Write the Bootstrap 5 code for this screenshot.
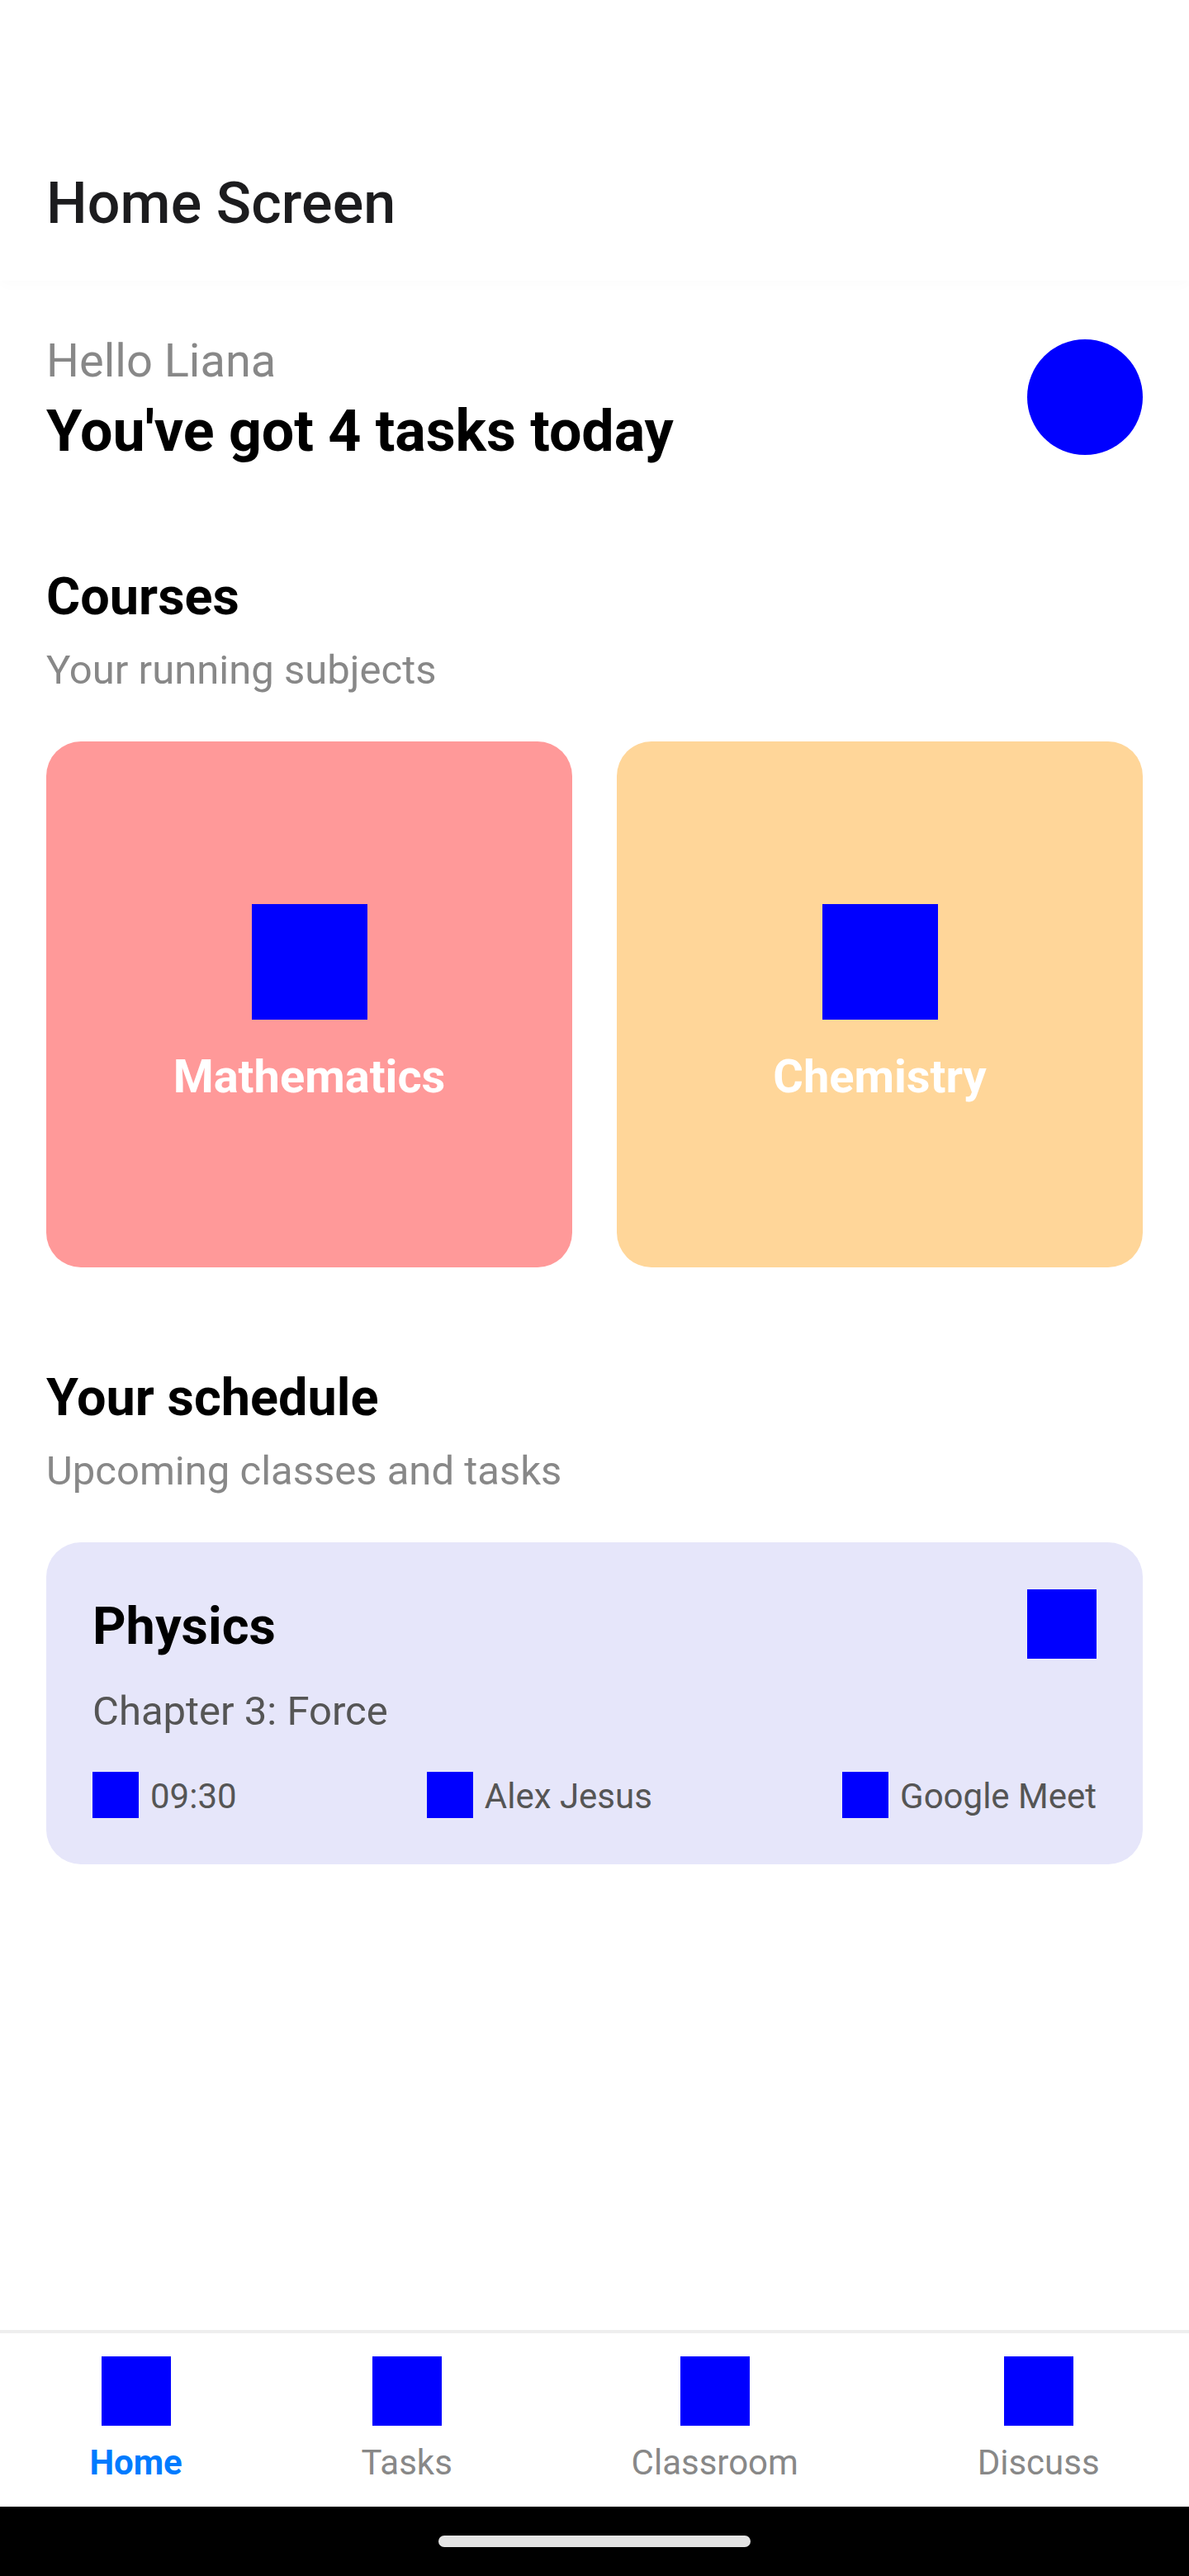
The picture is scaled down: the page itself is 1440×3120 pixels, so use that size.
<!DOCTYPE html>
<html lang="en">
<head>
<meta charset="utf-8">
<meta name="viewport" content="width=device-width, initial-scale=1">
<title>Home Screen</title>
<link href="https://cdn.jsdelivr.net/npm/bootstrap@5.3.0/dist/css/bootstrap.min.css" rel="stylesheet">
<style>
body{font-family:Roboto,sans-serif;background:#fff;color:#000;min-height:3120px}
.screen{height:3120px;overflow:hidden}
.app-header{height:340px;padding:205px 56px 0;background:#fff;box-shadow:0 4px 16px rgba(0,0,0,.02)}
.app-title{font-size:70px;line-height:82px;font-weight:500;letter-spacing:.1px;color:#1c1c1e}
.content{padding:67px 56px 0}
.hello{font-size:56px;line-height:60px;color:#888;margin-bottom:14px}
.headline{font-size:70px;line-height:82px;letter-spacing:-.06px}
.blue{background:#00f;flex:none}
.avatar{width:140px;height:140px;margin-top:4px}
.sq-lg{width:140px;height:140px}
.sq-md{width:84px;height:84px}
.sq-sm{width:56px;height:56px}
.sec-title{font-size:63px;line-height:73px}
.sec-sub{font-size:49px;line-height:57px;color:#888;margin-top:24px}
.courses-head{margin-top:123px}
.schedule-head{margin-top:121px}
.courses{gap:54px;margin-top:58px}
.course{height:637px;border-radius:42px;padding-top:197px;color:#fff;font-size:56px;line-height:66px;gap:36px}
.math{background:#f99}
.chem{background:#ffd699}
.lesson{margin-top:58px;background:#e6e6fa;border-radius:42px;padding:57px 56px 56px}
.lesson-title{margin-top:8px}
.chapter{font-size:49px;line-height:57px;color:#555;margin-top:35px}
.meta{margin-top:45px}
.meta-item{gap:14px;font-size:42px;line-height:49px;color:#555}
.meta-item span{margin-top:5px}
.tabs{height:214px;border-top:4px solid #eee;padding-top:28px;background:#fff}
.tab{gap:20px;font-size:42px;line-height:49px;color:#888}
.tab.current{color:#007bff}
.gesture{height:84px;padding-top:35px;background:#000}
.pill{width:378px;height:14px;border-radius:7px;background:#e4e4e4}
</style>
</head>
<body>
<div class="screen d-flex flex-column">
  <header class="app-header"><h1 class="app-title m-0">Home Screen</h1></header>
  <main class="content flex-grow-1">
    <div class="d-flex justify-content-between align-items-start">
      <div>
        <div class="hello">Hello Liana</div>
        <div class="headline fw-bold">You've got 4 tasks today</div>
      </div>
      <div class="avatar blue rounded-circle"></div>
    </div>

    <section class="courses-head">
      <h2 class="sec-title fw-bold mb-0">Courses</h2>
      <div class="sec-sub">Your running subjects</div>
      <div class="courses d-flex">
        <div class="course math d-flex flex-column align-items-center flex-fill w-50 fw-bold"><div class="sq-lg blue"></div>Mathematics</div>
        <div class="course chem d-flex flex-column align-items-center flex-fill w-50 fw-bold"><div class="sq-lg blue"></div>Chemistry</div>
      </div>
    </section>

    <section class="schedule-head">
      <h2 class="sec-title fw-bold mb-0">Your schedule</h2>
      <div class="sec-sub">Upcoming classes and tasks</div>
      <div class="lesson">
        <div class="d-flex justify-content-between align-items-start">
          <h3 class="sec-title lesson-title fw-bold mb-0">Physics</h3>
          <div class="sq-md blue"></div>
        </div>
        <div class="chapter">Chapter 3: Force</div>
        <div class="meta d-flex justify-content-between">
          <div class="meta-item d-flex"><div class="sq-sm blue"></div><span>09:30</span></div>
          <div class="meta-item d-flex"><div class="sq-sm blue"></div><span>Alex Jesus</span></div>
          <div class="meta-item d-flex"><div class="sq-sm blue"></div><span>Google Meet</span></div>
        </div>
      </div>
    </section>
  </main>
  <nav class="tabs d-flex justify-content-around flex-shrink-0">
    <div class="tab current d-flex flex-column align-items-center fw-bold"><div class="sq-md blue"></div>Home</div>
    <div class="tab d-flex flex-column align-items-center"><div class="sq-md blue"></div>Tasks</div>
    <div class="tab d-flex flex-column align-items-center"><div class="sq-md blue"></div>Classroom</div>
    <div class="tab d-flex flex-column align-items-center"><div class="sq-md blue"></div>Discuss</div>
  </nav>
  <div class="gesture d-flex justify-content-center flex-shrink-0"><div class="pill"></div></div>
</div>
<script src="https://cdn.jsdelivr.net/npm/bootstrap@5.3.0/dist/js/bootstrap.bundle.min.js"></script>
</body>
</html>
